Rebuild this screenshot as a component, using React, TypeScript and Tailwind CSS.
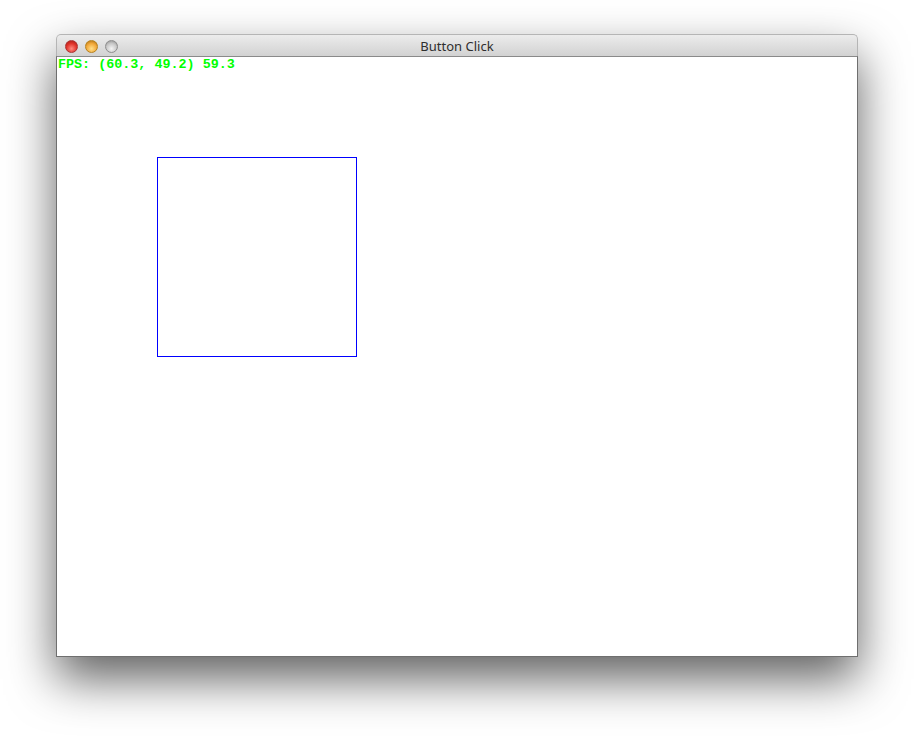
import React from "react";

export default function App() {
  return (
    <div className="w-[914px] h-[736px] bg-white overflow-hidden pl-[56px] pt-[34px]">
      <div className="w-[802px] rounded-t-[5px] shadow-[0_22px_48px_rgba(0,0,0,0.62)]">
        <div className="relative h-[22px] rounded-t-[5px] border border-b-0 border-[#b5b5b5] bg-gradient-to-b from-[#ececec] to-[#d2d2d2] flex items-center pt-[2px]">
          <div className="flex items-center gap-[7px] pl-[8px]">
            <span className="w-[13px] h-[13px] rounded-full border border-[#a33] bg-[radial-gradient(circle_at_50%_70%,#ff8a80,#e0332a_55%,#9c1b14)]" />
            <span className="w-[13px] h-[13px] rounded-full border border-[#b7821d] bg-[radial-gradient(circle_at_50%_70%,#ffe08a,#f2a83a_55%,#a36a10)]" />
            <span className="w-[13px] h-[13px] rounded-full border border-[#8e8e8e] bg-[radial-gradient(circle_at_50%_70%,#f4f4f4,#c8c8c8_55%,#8a8a8a)]" />
          </div>
          <div
            className="absolute inset-0 pt-[2px] flex items-center justify-center text-[13px] text-[#2e2e2e]"
            style={{ fontFamily: '"Noto Sans", "Liberation Sans", sans-serif' }}
          >
            Button Click
          </div>
        </div>
        <div className="h-[601px] bg-white border border-[#6f6f6f] border-t-[#8a8a8a]">
          <div
            className="pl-[1px] pt-[2px] text-[13.4px] leading-[11px] font-bold text-[#00ff00] whitespace-pre"
            style={{ fontFamily: '"Liberation Mono", "Courier New", monospace' }}
          >
            FPS: (60.3, 49.2) 59.3
          </div>
          <div className="ml-[100px] mt-[87px] w-[200px] h-[200px] border border-[#0000ff]" />
        </div>
      </div>
    </div>
  );
}
